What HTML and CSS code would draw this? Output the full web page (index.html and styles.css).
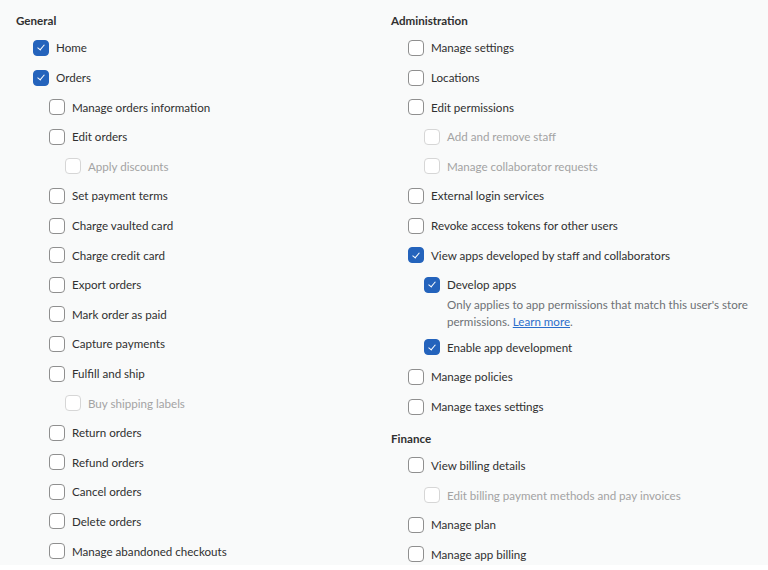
FILE: index.html
```html
<!DOCTYPE html>
<html lang="en">
<head>
    <meta charset="UTF-8">
    <meta name="viewport" content="width=device-width, initial-scale=1.0">
    <title>Permissions</title>
    <link rel="stylesheet" href="styles.css">
</head>
<body>
    <div class="panel">
        <div class="column">
            <h2>General</h2>
            <label class="row l1"><span class="box checked"></span>Home</label>
            <label class="row l1"><span class="box checked"></span>Orders</label>
            <label class="row l2"><span class="box"></span>Manage orders information</label>
            <label class="row l2"><span class="box"></span>Edit orders</label>
            <label class="row l3 disabled"><span class="box"></span>Apply discounts</label>
            <label class="row l2"><span class="box"></span>Set payment terms</label>
            <label class="row l2"><span class="box"></span>Charge vaulted card</label>
            <label class="row l2"><span class="box"></span>Charge credit card</label>
            <label class="row l2"><span class="box"></span>Export orders</label>
            <label class="row l2"><span class="box"></span>Mark order as paid</label>
            <label class="row l2"><span class="box"></span>Capture payments</label>
            <label class="row l2"><span class="box"></span>Fulfill and ship</label>
            <label class="row l3 disabled"><span class="box"></span>Buy shipping labels</label>
            <label class="row l2"><span class="box"></span>Return orders</label>
            <label class="row l2"><span class="box"></span>Refund orders</label>
            <label class="row l2"><span class="box"></span>Cancel orders</label>
            <label class="row l2"><span class="box"></span>Delete orders</label>
            <label class="row l2"><span class="box"></span>Manage abandoned checkouts</label>
        </div>
        <div class="column">
            <h2>Administration</h2>
            <label class="row l1"><span class="box"></span>Manage settings</label>
            <label class="row l1"><span class="box"></span>Locations</label>
            <label class="row l1"><span class="box"></span>Edit permissions</label>
            <label class="row l2 disabled"><span class="box"></span>Add and remove staff</label>
            <label class="row l2 disabled"><span class="box"></span>Manage collaborator requests</label>
            <label class="row l1"><span class="box"></span>External login services</label>
            <label class="row l1"><span class="box"></span>Revoke access tokens for other users</label>
            <label class="row l1"><span class="box checked"></span>View apps developed by staff and collaborators</label>
            <label class="row l2"><span class="box checked"></span>Develop apps</label>
            <p class="help">Only applies to app permissions that match this user's store permissions. <a href="#">Learn more</a>.</p>
            <label class="row l2"><span class="box checked"></span>Enable app development</label>
            <label class="row l1"><span class="box"></span>Manage policies</label>
            <label class="row l1"><span class="box"></span>Manage taxes settings</label>
            <h2 class="next">Finance</h2>
            <label class="row l1"><span class="box"></span>View billing details</label>
            <label class="row l2 disabled"><span class="box"></span>Edit billing payment methods and pay invoices</label>
            <label class="row l1"><span class="box"></span>Manage plan</label>
            <label class="row l1"><span class="box"></span>Manage app billing</label>
        </div>
    </div>
</body>
</html>
```
FILE: styles.css
```css
body {
    margin: 0;
    background-color: white;
    font-family: Lato, sans-serif;
    font-size: 11.6px;
    color: #303030;
}
.panel {
    height: 565px;
    overflow: hidden;
    background-color: #f9fafa;
    padding: 0 0 0 16px;
    box-sizing: border-box;
    display: grid;
    grid-template-columns: 375px 1fr;
}
.column {
    display: flex;
    flex-direction: column;
}
h2 {
    margin: 0;
    padding: 13px 0 4.2px;
    line-height: 16px;
    font-size: 11.6px;
    font-weight: 700;
}
h2.next {
    padding-top: 9.2px;
}
.row {
    display: flex;
    align-items: center;
    gap: 7px;
    height: 29.6px;
    flex-shrink: 0;
}
.l1 { padding-left: 17px; }
.l2 { padding-left: 33px; }
.l3 { padding-left: 49px; }
.box {
    width: 16px;
    height: 16px;
    box-sizing: border-box;
    border: 1.5px solid #8f8f8f;
    border-radius: 4px;
    background-color: white;
    flex-shrink: 0;
    position: relative;
}
.box.checked {
    background-color: #2463bc;
    border-color: #2463bc;
}
.box.checked::after {
    content: "";
    position: absolute;
    left: 4.5px;
    top: 2.5px;
    width: 3px;
    height: 6px;
    border: solid white;
    border-width: 0 1.5px 1.5px 0;
    transform: rotate(40deg);
}
.disabled {
    color: #a3a3a3;
}
.disabled .box {
    border-color: #d6d6d6;
}
.help {
    margin: -4px 0 3px 56px;
    line-height: 17px;
    color: #6d7175;
    max-width: 312px;
}
.help a {
    color: #2c6ecb;
}
```
